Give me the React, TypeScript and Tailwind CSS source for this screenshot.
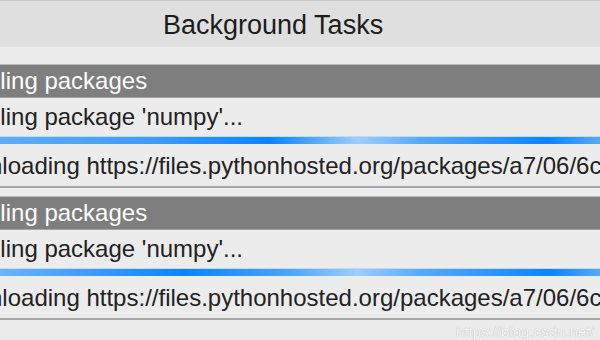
import React from "react";

type Task = {
  title: string;
  step: string;
  detail: string;
  bar: string;
};

const tasks: Task[] = [
  {
    title: "Installing packages",
    step: "Installing package 'numpy'...",
    detail: "Downloading https://files.pythonhosted.org/packages/a7/06/6cd2c8b1f1",
    bar: "bg-[linear-gradient(90deg,#5cadff_0px,#3d9cff_150px,#0a84ff_270px,#4aa5ff_310px,#9fcdff_358px,#55aaff_420px,#0a84ff_548px,#55aaff_600px)]",
  },
  {
    title: "Installing packages",
    step: "Installing package 'numpy'...",
    detail: "Downloading https://files.pythonhosted.org/packages/a7/06/6cd2c8b1f1",
    bar: "bg-[linear-gradient(90deg,#6ab4ff_0px,#2d94ff_120px,#0a84ff_185px,#4aa5ff_290px,#9fcdff_357px,#55aaff_420px,#0a84ff_550px,#55aaff_600px)]",
  },
];

const TaskCard = ({ task }: { task: Task }) => (
  <div className="mb-[8px]">
    {/* dark task header */}
    <div className="h-[34px] bg-[#7e7e7e] border-t border-b border-t-[#b9b9b9] border-b-[#a3a3a3] flex items-center">
      <span className="ml-[-57px] whitespace-nowrap text-[24px] text-white">{task.title}</span>
    </div>
    <div className="h-[38px] flex items-center">
      <span className="ml-[-57px] whitespace-nowrap text-[24px] text-[#222222]">{task.step}</span>
    </div>
    {/* indeterminate progress bar */}
    <div className={`h-[8px] border-t border-[#c2dbf5] ${task.bar}`} />
    <div className="h-[44px] pt-[2px] flex items-center border-b-2 border-[#a6a6a6]">
      <span className="ml-[-59px] whitespace-nowrap text-[24px] text-[#222222]">{task.detail}</span>
    </div>
  </div>
);

export default function App() {
  return (
    <div className="relative w-[600px] h-[340px] overflow-hidden bg-[#ececec] font-['Liberation_Sans',Arial,sans-serif]">
      <div className="h-[47px] bg-[#dfdfdf] border-t border-[#c6c6c6] flex items-center pl-[163px] pt-[2px]">
        <span className="text-[27px] text-[#1c1c1c] whitespace-nowrap">Background Tasks</span>
      </div>
      <div className="h-[17px]" />
      {tasks.map((t, i) => (
        <TaskCard key={i} task={t} />
      ))}
      {/* blog watermark */}
      <div className="absolute left-[456px] top-[321px] whitespace-nowrap text-[15px] text-white/90 [text-shadow:0_0_1px_#9a9a9a]">
        https://blog.csdn.net/
      </div>
    </div>
  );
}
